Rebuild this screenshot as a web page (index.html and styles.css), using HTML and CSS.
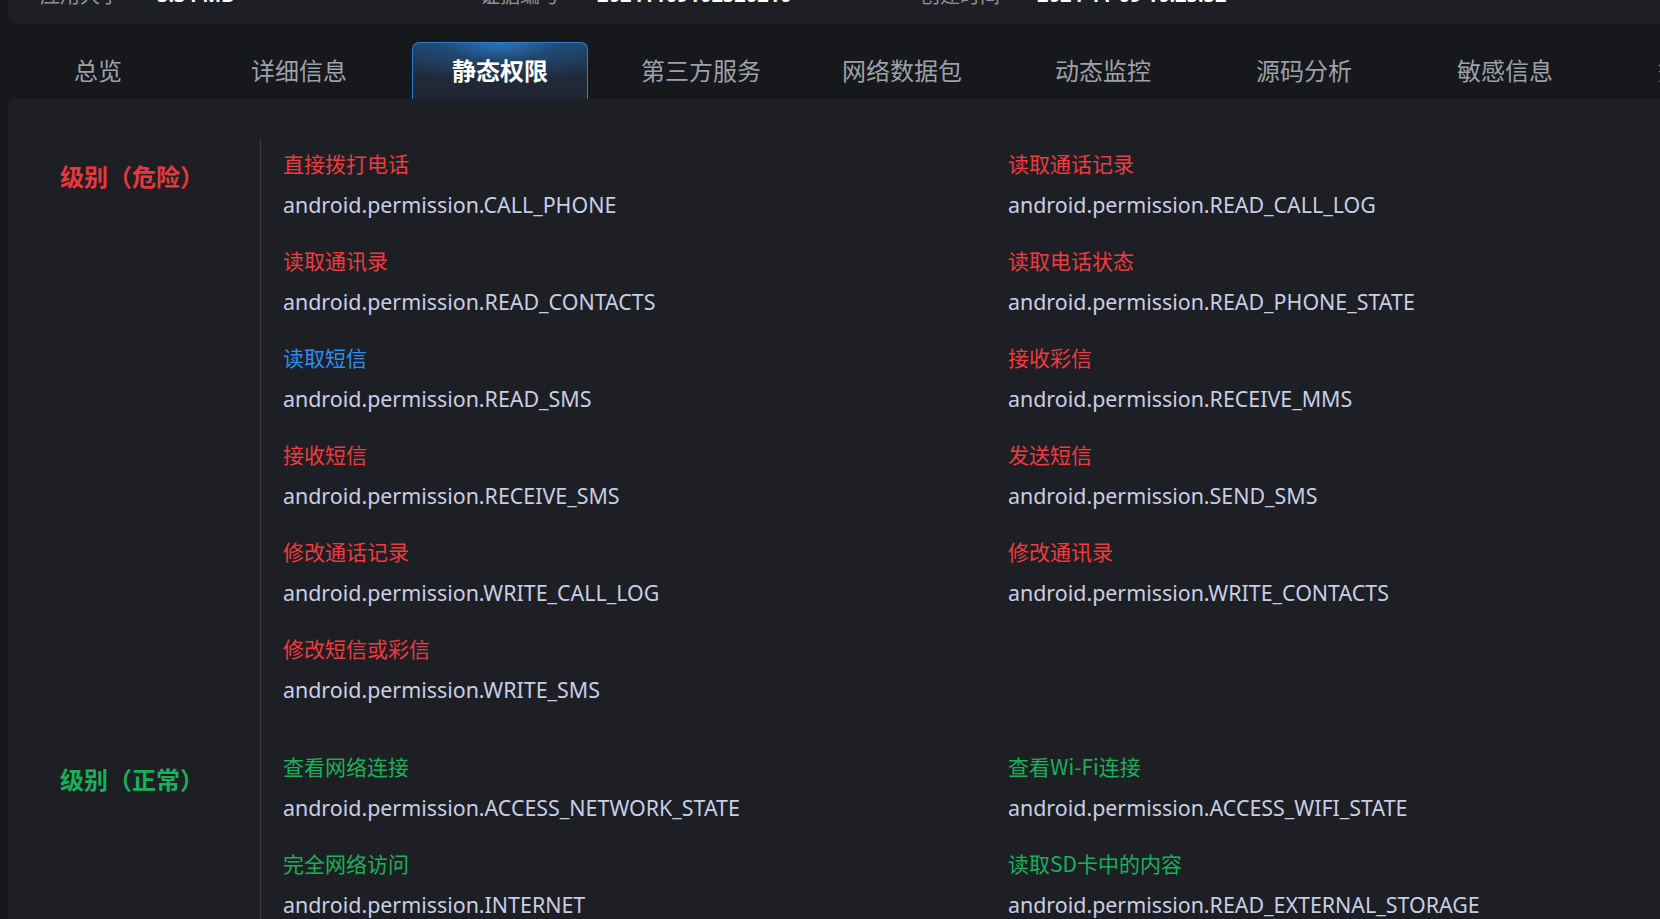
FILE: index.html
```html
<!DOCTYPE html>
<html lang="zh-CN">
<head>
<meta charset="utf-8">
<title>静态权限</title>
<link rel="stylesheet" href="styles.css">
</head>
<body>
<div class="page">
  <div class="info-card">
    <div class="info-item"><span class="info-label">应用大小</span><span class="info-value">5.34 MB</span></div>
    <div class="info-item"><span class="info-label">证据编号</span><span class="info-value">20241109102520210</span></div>
    <div class="info-item"><span class="info-label">创建时间</span><span class="info-value">2024-11-09 10:25:52</span></div>
  </div>

  <nav class="tabs">
    <div class="tab">总览</div>
    <div class="tab">详细信息</div>
    <div class="tab active">静态权限</div>
    <div class="tab">第三方服务</div>
    <div class="tab">网络数据包</div>
    <div class="tab">动态监控</div>
    <div class="tab">源码分析</div>
    <div class="tab">敏感信息</div>
    <div class="tab">签名信息</div>
  </nav>

  <main class="panel">
    <section class="level">
      <div class="level-label danger">级别（危险）</div>
      <div class="perm-list">
        <div class="perm"><div class="perm-title red">直接拨打电话</div><div class="perm-name">android.permission.CALL_PHONE</div></div>
        <div class="perm"><div class="perm-title red">读取通话记录</div><div class="perm-name">android.permission.READ_CALL_LOG</div></div>
        <div class="perm"><div class="perm-title red">读取通讯录</div><div class="perm-name">android.permission.READ_CONTACTS</div></div>
        <div class="perm"><div class="perm-title red">读取电话状态</div><div class="perm-name">android.permission.READ_PHONE_STATE</div></div>
        <div class="perm"><div class="perm-title blue">读取短信</div><div class="perm-name">android.permission.READ_SMS</div></div>
        <div class="perm"><div class="perm-title red">接收彩信</div><div class="perm-name">android.permission.RECEIVE_MMS</div></div>
        <div class="perm"><div class="perm-title red">接收短信</div><div class="perm-name">android.permission.RECEIVE_SMS</div></div>
        <div class="perm"><div class="perm-title red">发送短信</div><div class="perm-name">android.permission.SEND_SMS</div></div>
        <div class="perm"><div class="perm-title red">修改通话记录</div><div class="perm-name">android.permission.WRITE_CALL_LOG</div></div>
        <div class="perm"><div class="perm-title red">修改通讯录</div><div class="perm-name">android.permission.WRITE_CONTACTS</div></div>
        <div class="perm"><div class="perm-title red">修改短信或彩信</div><div class="perm-name">android.permission.WRITE_SMS</div></div>
      </div>
    </section>
    <section class="level">
      <div class="level-label normal">级别（正常）</div>
      <div class="perm-list">
        <div class="perm"><div class="perm-title green">查看网络连接</div><div class="perm-name">android.permission.ACCESS_NETWORK_STATE</div></div>
        <div class="perm"><div class="perm-title green">查看Wi-Fi连接</div><div class="perm-name">android.permission.ACCESS_WIFI_STATE</div></div>
        <div class="perm"><div class="perm-title green">完全网络访问</div><div class="perm-name">android.permission.INTERNET</div></div>
        <div class="perm"><div class="perm-title green">读取SD卡中的内容</div><div class="perm-name">android.permission.READ_EXTERNAL_STORAGE</div></div>
      </div>
    </section>
  </main>
</div>
</body>
</html>
```

FILE: styles.css
```css
html, body {
  margin: 0;
  padding: 0;
  height: 100%;
  overflow: hidden;
  background: #17181c;
}

body {
  font-family: "Noto Sans", "Noto Sans CJK SC", sans-serif;
  color: #c5cbe0;
}

.page {
  width: 1760px;
  padding-left: 8px;
  box-sizing: border-box;
}

/* top info card (mostly scrolled away) */
.info-card {
  height: 64px;
  margin-top: -40px;
  background: #1e1f24;
  border-radius: 0 0 8px 8px;
  display: flex;
  align-items: center;
  padding-left: 32px;
  padding-top: 4px;
  box-sizing: border-box;
}

.info-item {
  width: 440px;
  display: flex;
  align-items: center;
  font-size: 20px;
}

.info-label {
  width: 117px;
  color: #8f929a;
  font-family: "Noto Sans CJK SC", sans-serif;
}

.info-value {
  color: #ffffff;
  font-weight: 700;
}

/* tabs */
.tabs {
  display: flex;
  gap: 25px;
  padding-top: 18px;
  padding-left: 2px;
  height: 75px;
  box-sizing: border-box;
  overflow: hidden;
}

.tab {
  flex: 0 0 176px;
  height: 57px;
  box-sizing: border-box;
  display: flex;
  align-items: center;
  justify-content: center;
  padding-bottom: 4px;
  font-family: "Noto Sans CJK SC", sans-serif;
  font-size: 24px;
  color: #9ea1a9;
  border: 1px solid transparent;
  border-bottom: none;
  border-radius: 7px 7px 0 0;
}

.tab.active {
  color: #ffffff;
  font-weight: 700;
  border-color: #2b7fce;
  background:
    radial-gradient(ellipse 75% 70% at 50% 0%, rgba(44, 122, 200, 0.9) 0%, rgba(35, 84, 135, 0.5) 45%, rgba(30, 40, 55, 0) 100%),
    linear-gradient(180deg, #1f4266 0%, #1f2a3a 60%, #1f2530 100%);
}

/* content panel */
.panel {
  background: #1e1f24;
  border-radius: 6px 0 0 0;
  padding-top: 39px;
  min-height: 900px;
}

.level {
  display: flex;
}

.level-label {
  width: 200px;
  flex: 0 0 200px;
  padding-left: 52px;
  padding-top: 23px;
  font-family: "Noto Sans CJK SC", sans-serif;
  font-size: 24px;
  line-height: 30px;
  font-weight: 700;
  height: 30px;
}

.level-label.danger { color: #e8383d; }
.level-label.normal { color: #17b15a; }

.perm-list {
  flex: 1;
  border-left: 1px solid #393a40;
  padding: 11px 0 37px 22px;
  display: grid;
  grid-template-columns: 725px 1fr;
  row-gap: 27px;
}

.perm {
  display: flex;
  flex-direction: column;
  gap: 14px;
}

.perm-title {
  font-family: "Noto Sans CJK SC", sans-serif;
  font-size: 21px;
  line-height: 28px;
  height: 28px;
}

.perm-title.red { color: #ef3a3f; }
.perm-title.blue { color: #2690f5; }
.perm-title.green { color: #17b15a; }

.perm-name {
  font-size: 21.4px;
  line-height: 28px;
  height: 28px;
  color: #c8cee4;
  white-space: nowrap;
}
```
